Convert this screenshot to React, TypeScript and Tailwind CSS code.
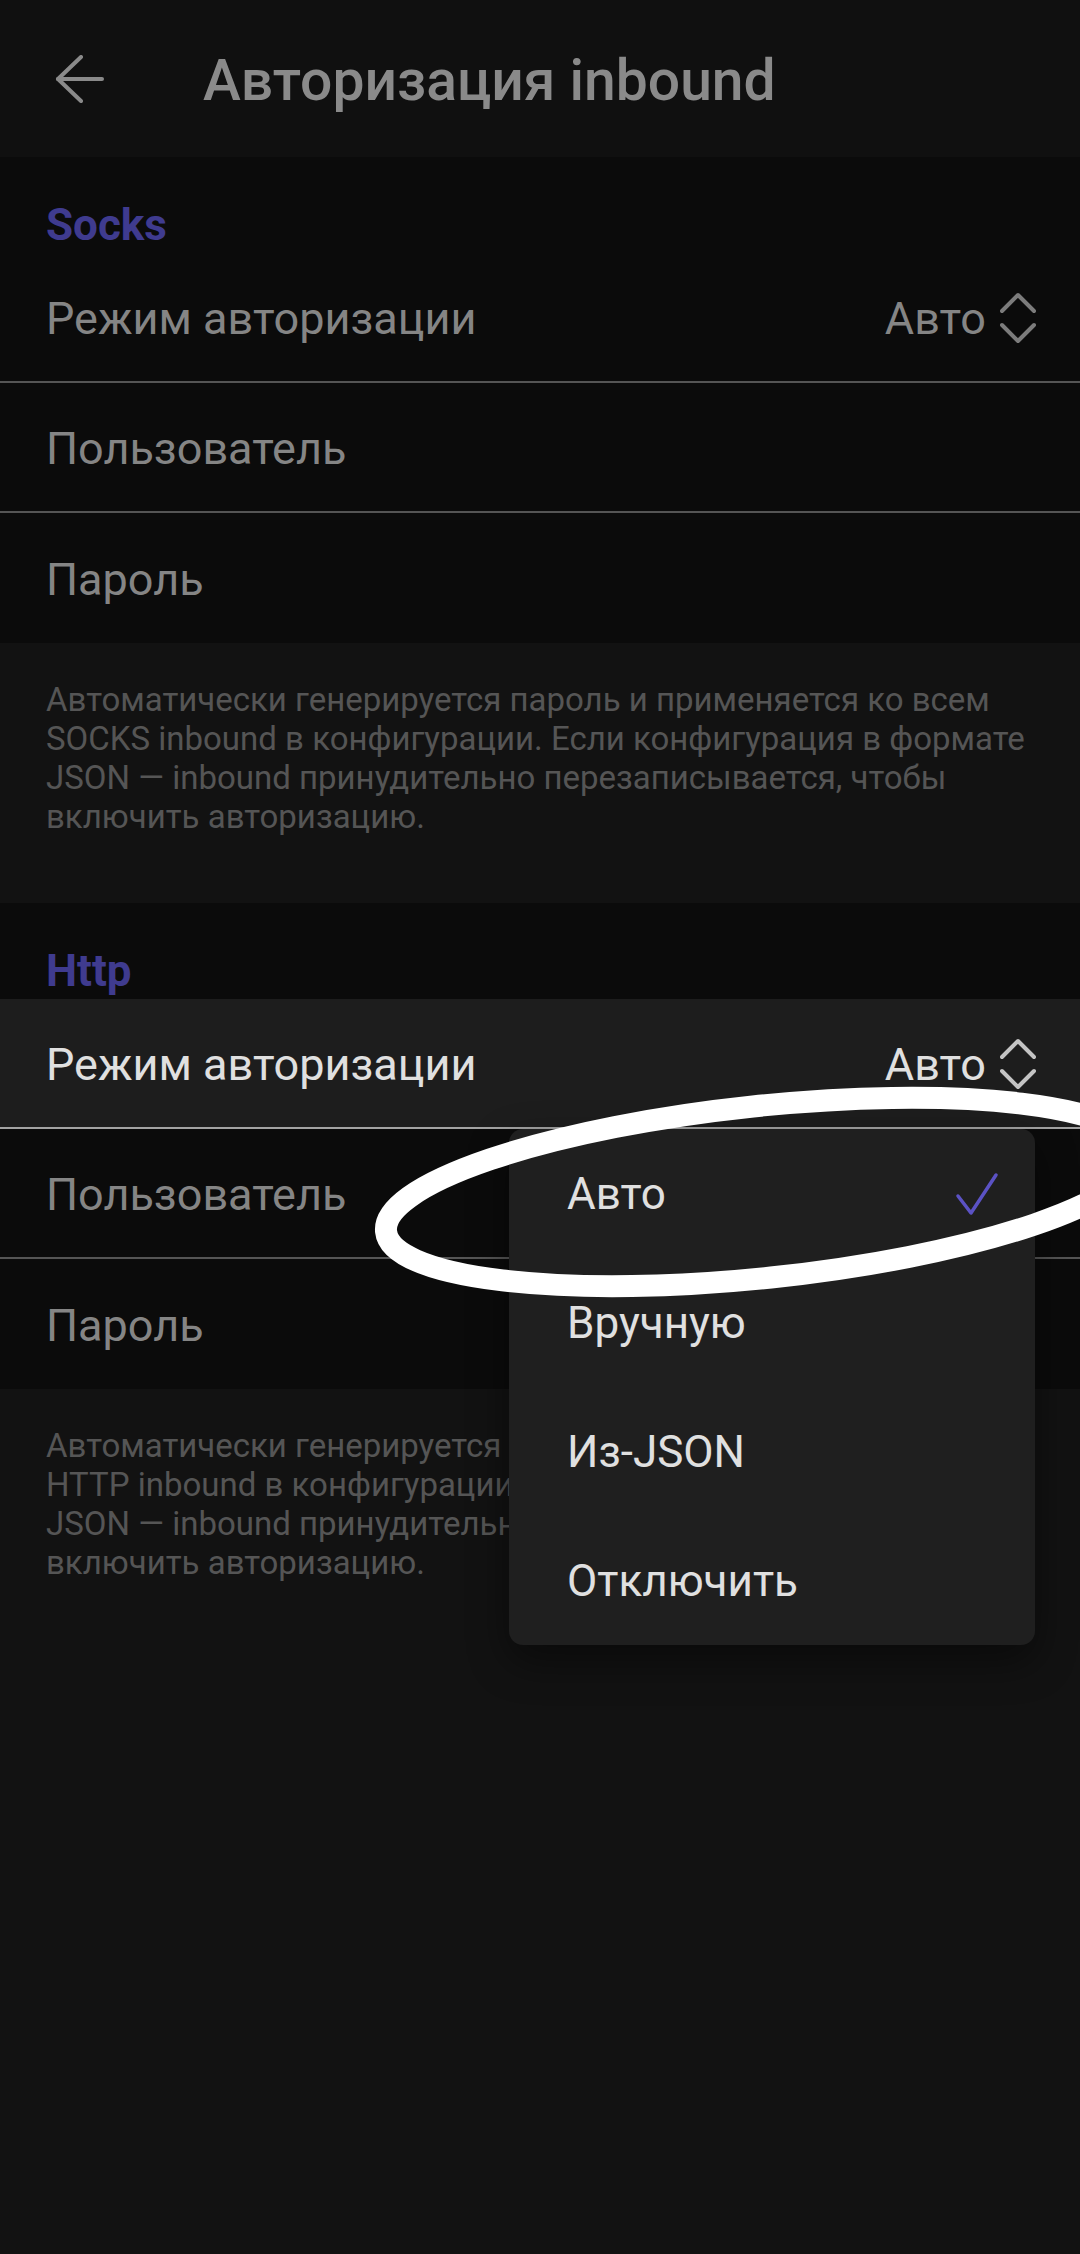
import React from 'react';

const FONT = { fontFamily: 'Roboto, "Noto Sans", sans-serif' };

const Chevrons: React.FC<{ color: string }> = ({ color }) => (
    <svg width="36" height="52" viewBox="0 0 36 52" fill="none" stroke={color} strokeWidth="4" strokeLinecap="round" strokeLinejoin="round">
        <path d="M2 19 L18 3 L34 19" />
        <path d="M2 33 L18 49 L34 33" />
    </svg>
);

interface RowProps {
    label: string;
    value?: boolean;
    divider?: boolean;
    active?: boolean;
}

const Row: React.FC<RowProps> = ({ label, value, divider, active }) => (
    <div
        className={`flex h-[130px] items-center justify-between pl-[46px] pr-[44px] ${divider ? (active ? 'border-b-2 border-[#a3a3a3]' : 'border-b-2 border-[#555555]') : ''} ${active ? 'bg-[#1d1d1d]' : ''}`}
    >
        <span className={`mt-[4px] text-[45px] leading-[52px] ${active ? 'text-[#e0e0e0]' : 'text-[#858585]'}`}>{label}</span>
        {value && (
            <div className="mt-[2px] flex items-center gap-[14px]">
                <span className={`mt-[2px] text-[45px] leading-[52px] ${active ? 'text-[#e0e0e0]' : 'text-[#858585]'}`}>Авто</span>
                <Chevrons color={active ? '#c4c4c4' : '#7c7c7c'} />
            </div>
        )}
    </div>
);

const Section: React.FC<{ title: string; lines: string[]; active?: boolean }> = ({ title, lines, active }) => (
    <div>
        <div className="h-[96px] bg-[#0b0b0b] pl-[46px] pt-[42px]">
            <span className="text-[44px] font-bold leading-[52px] text-[#3f3b8f]">{title}</span>
        </div>
        <div className="bg-[#0b0b0b]">
            <Row label="Режим авторизации" value divider active={active} />
            <Row label="Пользователь" divider />
            <Row label="Пароль" />
        </div>
        <div className="h-[260px] bg-[#121212] pl-[46px] pt-[37px]">
            {lines.map(l => (
                <div key={l} className="whitespace-nowrap text-[33px] leading-[39px] text-[#555555]">{l}</div>
            ))}
        </div>
    </div>
);

const options = ['Авто', 'Вручную', 'Из-JSON', 'Отключить'];

export default function App() {
    return (
        <div className="relative h-[2254px] w-[1080px] overflow-hidden bg-[#121212]" style={FONT}>
            {/* top bar */}
            <div className="flex h-[157px] items-center bg-[#101010]">
                <div className="flex w-[203px] pl-[55px]">
                    <svg width="50" height="48" viewBox="0 0 50 48" fill="none" stroke="#8a8a8a" strokeWidth="4" strokeLinecap="round" strokeLinejoin="round">
                        <path d="M47 24 H3" />
                        <path d="M26 2 L3 24 L26 46" />
                    </svg>
                </div>
                <span className="mt-[4px] text-[57px] font-medium leading-[64px] text-[#8a8a8a]">Авторизация inbound</span>
            </div>

            <Section
                title="Socks"
                lines={[
                    'Автоматически генерируется пароль и применяется ко всем',
                    'SOCKS inbound в конфигурации. Если конфигурация в формате',
                    'JSON — inbound принудительно перезаписывается, чтобы',
                    'включить авторизацию.',
                ]}
            />
            <Section
                title="Http"
                active
                lines={[
                    'Автоматически генерируется пароль и применяется ко всем',
                    'HTTP inbound в конфигурации. Если конфигурация в формате',
                    'JSON — inbound принудительно перезаписывается, чтобы',
                    'включить авторизацию.',
                ]}
            />

            {/* dropdown menu */}
            <div className="absolute left-[509px] top-[1129px] w-[526px] rounded-[14px] bg-[#1f1f1f] shadow-[0_16px_40px_rgba(0,0,0,0.45)]">
                {options.map((o, i) => (
                    <div key={o} className="flex h-[129px] items-center justify-between pl-[58px] pr-[36px]">
                        <span className="text-[44px] leading-[52px] text-[#e0e0e0]">{o}</span>
                        {i === 0 && (
                            <svg width="44" height="44" viewBox="0 0 44 44" fill="none" stroke="#5b52c4" strokeWidth="3.5" strokeLinecap="round" strokeLinejoin="round">
                                <path d="M3 24 L16 41 L41 3" />
                            </svg>
                        )}
                    </div>
                ))}
            </div>

            {/* hand-drawn highlight */}
            <svg className="pointer-events-none absolute left-0 top-0" width="1080" height="2254" viewBox="0 0 1080 2254" fill="none">
                <ellipse
                    cx="762"
                    cy="1192"
                    rx="378"
                    ry="86"
                    transform="rotate(-6 762 1192)"
                    stroke="#ffffff"
                    strokeWidth="22"
                />
            </svg>
        </div>
    );
}
